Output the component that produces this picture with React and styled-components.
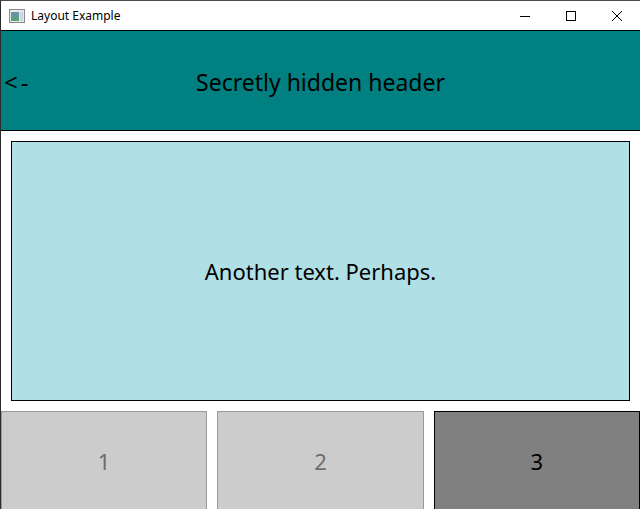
import React from "react";
import styled, { createGlobalStyle } from "styled-components";

const GlobalStyle = createGlobalStyle`
  html, body {
    margin: 0;
    padding: 0;
    background: #ffffff;
  }
  #root {
    width: 640px;
    height: 509px;
    overflow: hidden;
  }
`;

const Window = styled.div`
  display: flex;
  flex-direction: column;
  width: 640px;
  height: 509px;
  box-sizing: border-box;
  border-left: 1px solid #2b2b2b;
  border-top: 1px solid #4a4a4a;
  background: #ffffff;
  overflow: hidden;
  font-family: "Noto Sans", "Open Sans", sans-serif;
`;

const TitleBar = styled.div`
  display: flex;
  align-items: center;
  height: 29px;
  flex-shrink: 0;
  background: #ffffff;
`;

const AppIcon = styled.div`
  display: flex;
  margin-left: 8px;
  margin-right: 6px;
`;

const TitleText = styled.span`
  flex: 1;
  font-family: "Noto Sans", "Open Sans", sans-serif;
  font-size: 12px;
  color: #000000;
`;

const ControlButton = styled.div`
  display: flex;
  align-items: center;
  justify-content: center;
  width: 46px;
  height: 29px;
`;

const Header = styled.div`
  display: flex;
  align-items: center;
  position: relative;
  height: 99px;
  flex-shrink: 0;
  background: #008080;
  border-top: 1px solid #000000;
  border-bottom: 1px solid #000000;
`;

const BackLabel = styled.span`
  position: absolute;
  left: 3px;
  top: 50%;
  transform: translateY(-50%);
  font-size: 24px;
  letter-spacing: 3px;
  color: #000000;
`;

const HeaderTitle = styled.span`
  flex: 1;
  text-align: center;
  font-size: 23px;
  color: #000000;
  margin-top: 2px;
`;

const Content = styled.div`
  display: flex;
  flex-direction: column;
  padding: 10px;
  height: 280px;
  box-sizing: border-box;
  flex-shrink: 0;
`;

const Panel = styled.div`
  flex: 1;
  display: flex;
  align-items: center;
  justify-content: center;
  background: #b0dfe5;
  border: 1px solid #000000;
  font-size: 22px;
  color: #000000;
`;

const ButtonRow = styled.div`
  display: grid;
  grid-template-columns: 1fr 1fr 1fr;
  gap: 10px;
  height: 100px;
  flex-shrink: 0;
`;

const TabButton = styled.div`
  display: flex;
  align-items: center;
  justify-content: center;
  box-sizing: border-box;
  background: ${p => (p.$active ? "#808080" : "#cccccc")};
  border: 1px solid ${p => (p.$active ? "#000000" : "#999999")};
  color: ${p => (p.$active ? "#000000" : "#6d6d6d")};
  font-size: 22px;
`;

const WindowIcon = () => (
  <svg width="16" height="14" viewBox="0 0 16 14">
    <defs>
      <linearGradient id="g" x1="0" y1="0" x2="0" y2="1">
        <stop offset="0" stopColor="#6d8fb8" />
        <stop offset="1" stopColor="#58a46c" />
      </linearGradient>
    </defs>
    <rect x="0.5" y="0.5" width="15" height="13" fill="#e8e8e8" stroke="#8a8a8a" />
    <rect x="2" y="3" width="8" height="9" fill="url(#g)" />
    <rect x="11" y="3" width="3" height="9" fill="#c9d6e4" />
  </svg>
);

const App = () => {
  return (
    <>
      <GlobalStyle />
      <Window>
        <TitleBar>
          <AppIcon>
            <WindowIcon />
          </AppIcon>
          <TitleText>Layout Example</TitleText>
          <ControlButton>
            <svg width="10" height="10" viewBox="0 0 10 10">
              <line x1="0" y1="5.5" x2="10" y2="5.5" stroke="#000" strokeWidth="1" />
            </svg>
          </ControlButton>
          <ControlButton>
            <svg width="10" height="10" viewBox="0 0 10 10">
              <rect x="0.5" y="0.5" width="9" height="9" fill="none" stroke="#000" strokeWidth="1" />
            </svg>
          </ControlButton>
          <ControlButton>
            <svg width="10" height="10" viewBox="0 0 10 10">
              <path d="M0 0 L10 10 M10 0 L0 10" stroke="#000" strokeWidth="1" />
            </svg>
          </ControlButton>
        </TitleBar>
        <Header>
          <BackLabel>&lt;-</BackLabel>
          <HeaderTitle>Secretly hidden header</HeaderTitle>
        </Header>
        <Content>
          <Panel>Another text. Perhaps.</Panel>
        </Content>
        <ButtonRow>
          <TabButton>1</TabButton>
          <TabButton>2</TabButton>
          <TabButton $active>3</TabButton>
        </ButtonRow>
      </Window>
    </>
  );
};

export default App;
